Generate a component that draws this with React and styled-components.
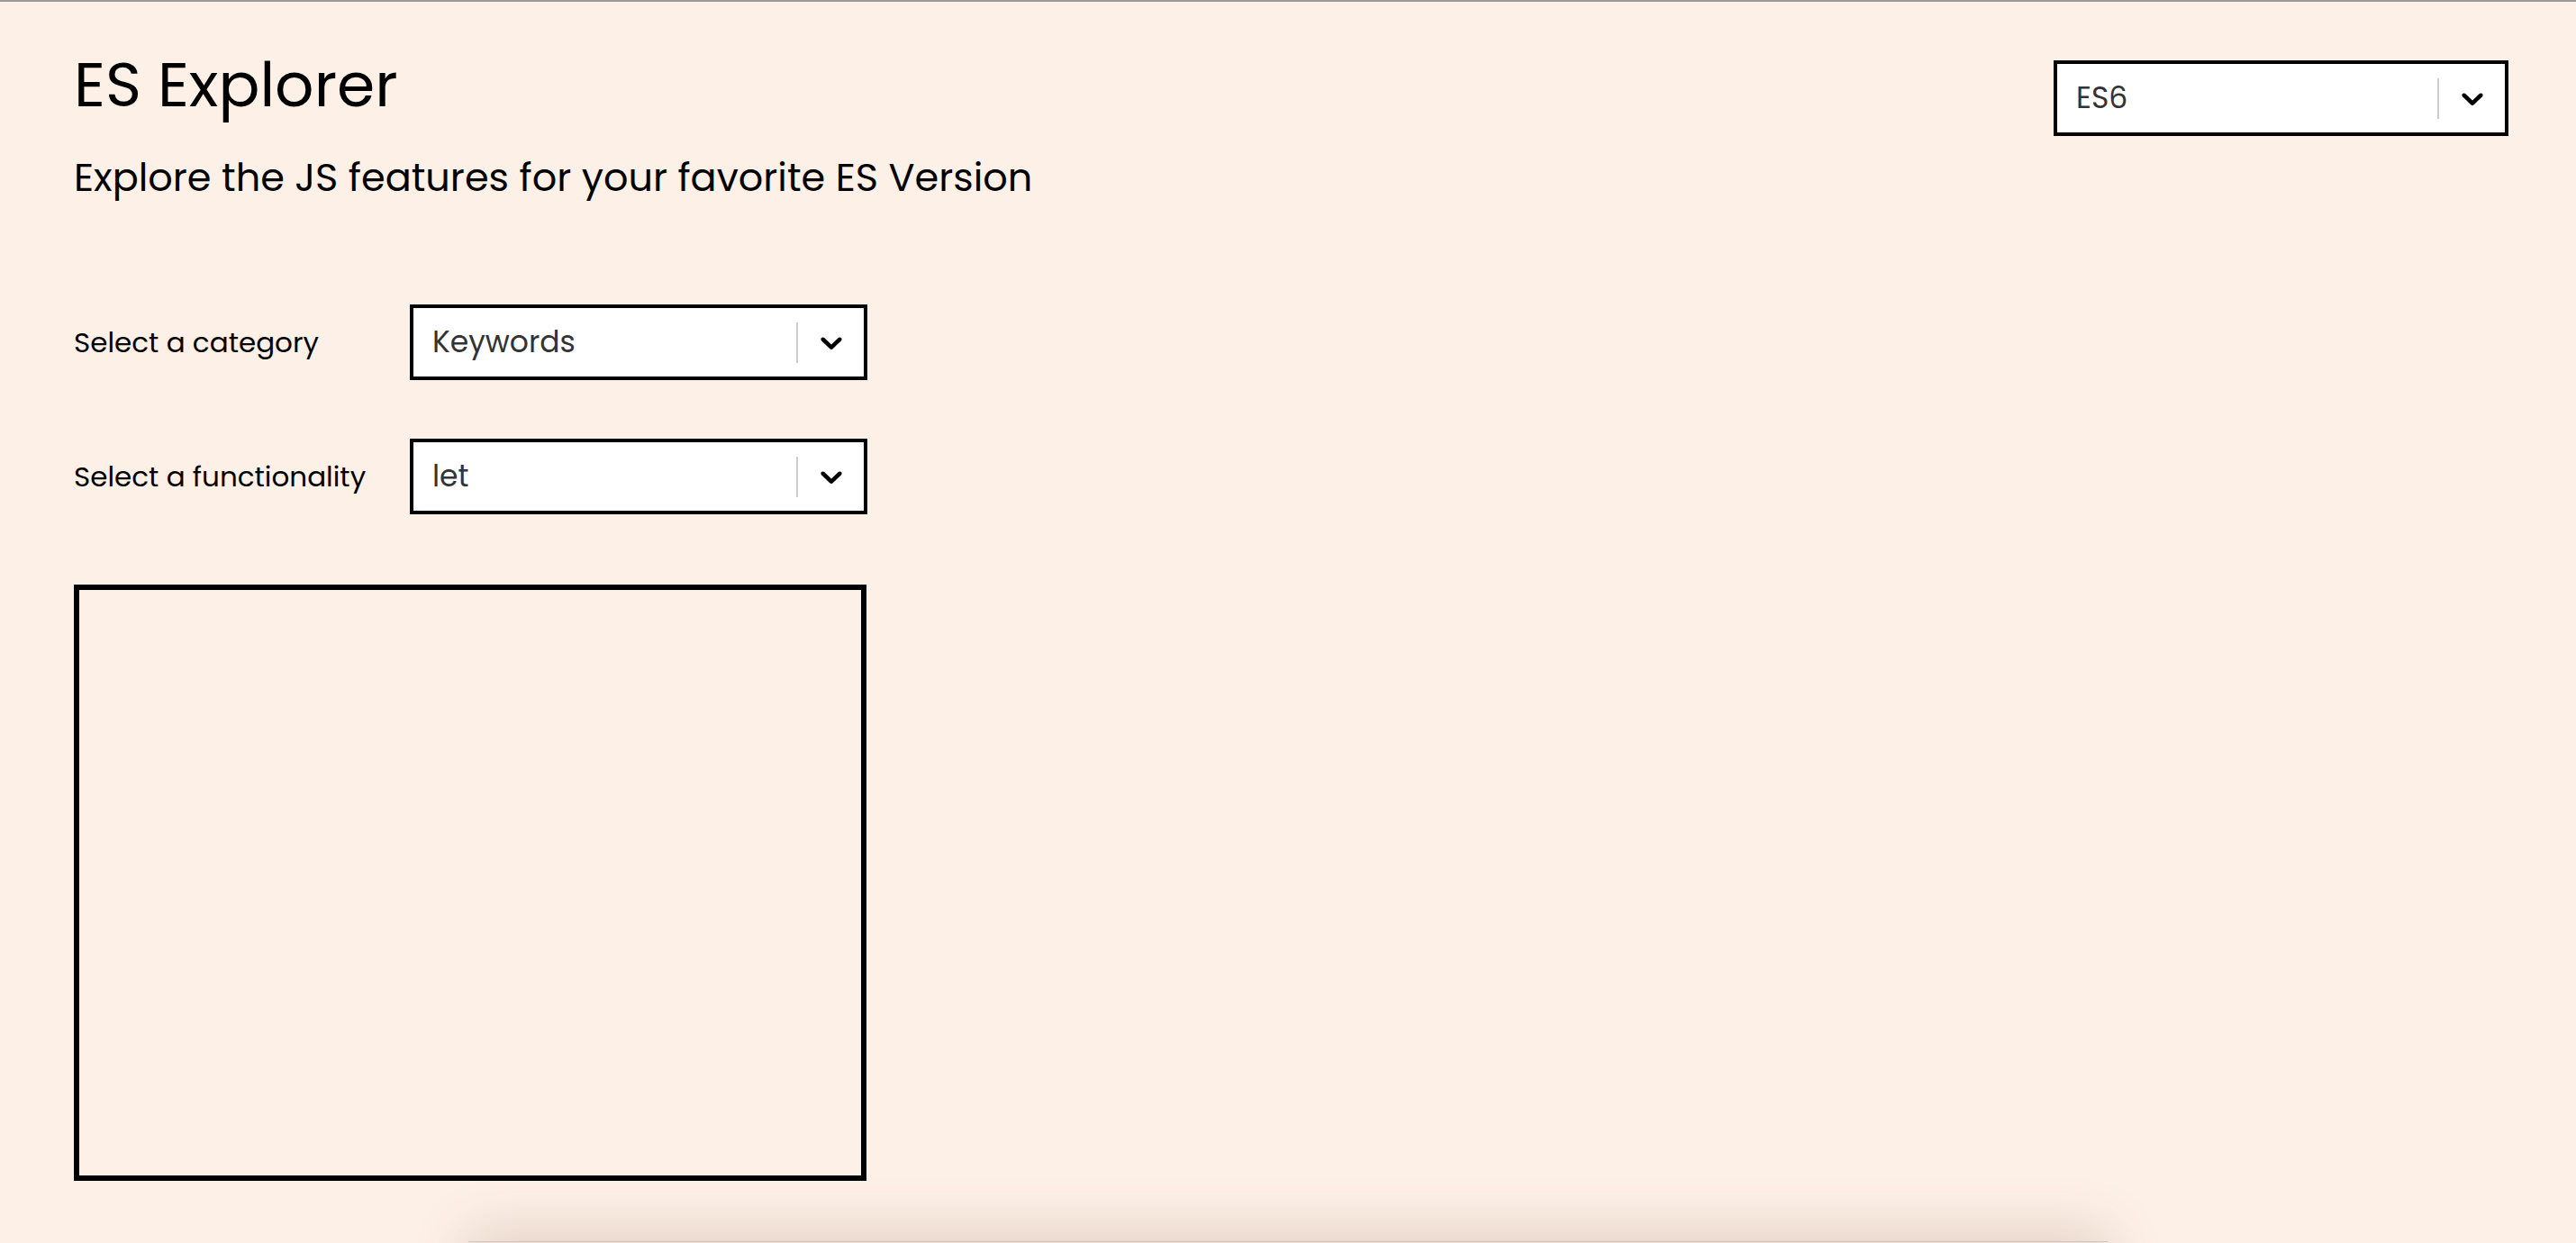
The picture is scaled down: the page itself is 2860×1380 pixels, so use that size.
import React from 'react';
import styled, { createGlobalStyle } from 'styled-components';

const GlobalStyle = createGlobalStyle`
  html, body {
    margin: 0;
    padding: 0;
    background: #fdf0e7;
    font-family: "Poppins", "Open Sans", "Noto Sans", sans-serif;
    color: #000;
    overflow: hidden;
  }
`;

const Page = styled.div`
  border-top: 2px solid #9e9b99;
  min-height: 100vh;
  display: flex;
  flex-direction: column;
`;

const Header = styled.header`
  display: flex;
  justify-content: space-between;
  align-items: flex-start;
  padding: 53px 75px 0 82px;
`;

const Title = styled.h1`
  margin: 0;
  font-size: 68px;
  line-height: 80px;
  font-weight: 400;
`;

const Subtitle = styled.p`
  margin: 34px 0 0;
  font-size: 43px;
  line-height: 56px;
  font-weight: 400;
`;

const Form = styled.div`
  display: flex;
  flex-direction: column;
  gap: 65px;
  padding-left: 82px;
  margin-top: 113px;
`;

const FieldRow = styled.div`
  display: grid;
  grid-template-columns: 373px 508px;
  align-items: center;
`;

const FieldLabel = styled.label`
  font-size: 31px;
  line-height: 44px;
`;

const SelectBox = styled.div`
  box-sizing: border-box;
  width: ${p => p.$width || 508}px;
  height: 84px;
  border: 4px solid #000;
  margin-top: ${p => p.$offset || 0}px;
  background: #fdf0e7;
`;

const SelectControl = styled.div`
  height: 100%;
  display: flex;
  align-items: center;
  background: #fff;
  border-radius: 5px;
`;

const SelectValue = styled.div`
  flex: 1;
  padding-left: 21px;
  font-size: 33px;
  color: #333;
  white-space: nowrap;
  overflow: hidden;
`;

const Separator = styled.span`
  align-self: center;
  width: 2px;
  height: 45px;
  background: #cccccc;
`;

const Indicator = styled.div`
  width: 73px;
  display: flex;
  align-items: center;
  justify-content: center;
`;

const CodeBox = styled.div`
  box-sizing: border-box;
  width: 880px;
  height: 662px;
  margin: 78px 0 0 82px;
  border: 6px solid #000;
`;

const FooterCard = styled.div`
  width: 1820px;
  height: 400px;
  margin: 67px auto 0;
  border-top: 1px solid #cfc6bf;
  background: #ede1d8;
  box-shadow: 0 -8px 60px rgba(110, 70, 40, 0.2);
`;

const Chevron = () => (
  <svg width="40" height="40" viewBox="0 0 20 20" fill="#000" aria-hidden="true">
    <path d="M4.516 7.548c0.436-0.446 1.043-0.481 1.576 0l3.908 3.747 3.908-3.747c0.533-0.481 1.141-0.446 1.574 0 0.436 0.445 0.408 1.197 0 1.615-0.406 0.418-4.695 4.502-4.695 4.502-0.217 0.223-0.502 0.335-0.787 0.335s-0.57-0.112-0.789-0.335c0 0-4.287-4.084-4.695-4.502s-0.436-1.17 0-1.615z" />
  </svg>
);

const Select = ({ value, width, offset }) => (
  <SelectBox $width={width} $offset={offset}>
    <SelectControl>
      <SelectValue>{value}</SelectValue>
      <Separator />
      <Indicator>
        <Chevron />
      </Indicator>
    </SelectControl>
  </SelectBox>
);

export default function App() {
  return (
    <Page>
      <GlobalStyle />
      <Header>
        <div>
          <Title>ES Explorer</Title>
          <Subtitle>Explore the JS features for your favorite ES Version</Subtitle>
        </div>
        <Select value="ES6" width={505} offset={12} />
      </Header>

      <Form>
        <FieldRow>
          <FieldLabel>Select a category</FieldLabel>
          <Select value="Keywords" />
        </FieldRow>
        <FieldRow>
          <FieldLabel>Select a functionality</FieldLabel>
          <Select value="let" />
        </FieldRow>
      </Form>

      <CodeBox />

      <FooterCard />
    </Page>
  );
}
